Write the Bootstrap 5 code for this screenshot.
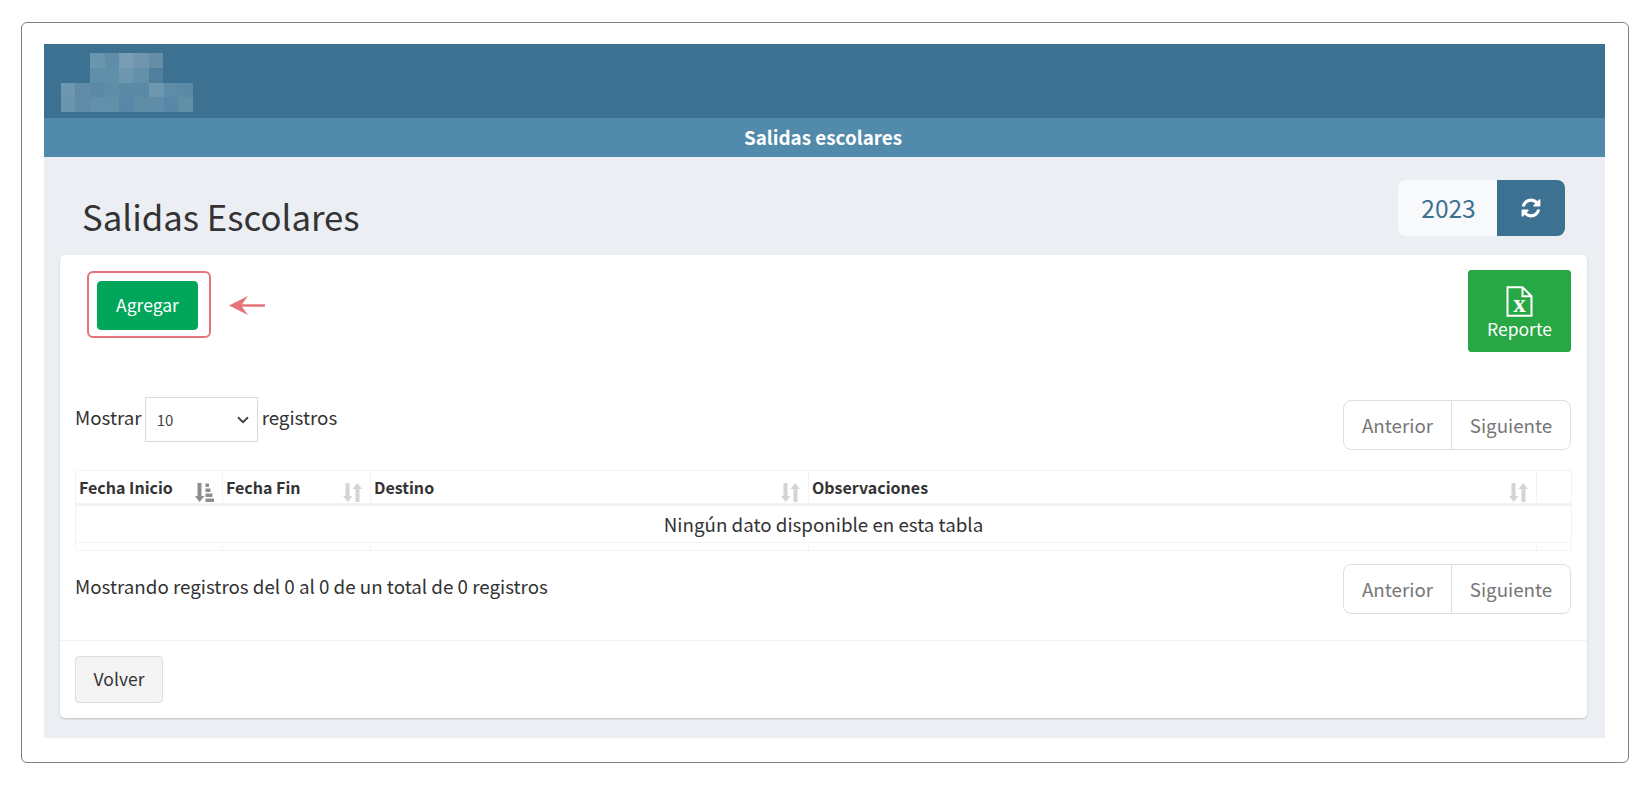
<!DOCTYPE html>
<html lang="es">
<head>
<meta charset="utf-8">
<title>Salidas Escolares</title>
<link href="https://cdn.jsdelivr.net/npm/bootstrap@5.3.0/dist/css/bootstrap.min.css" rel="stylesheet">
<style>
html,body{background:#fff;}
body{font-family:"Noto Sans CJK SC","Noto Sans",sans-serif;font-size:18.75px;color:#333;padding:22px 22px 0 21px;}
.frame{border:1px solid #808080;border-radius:6px;padding:21px 23px 24px 22px;height:741px;}
.shell{background:#ebeef3;height:694px;}
.top-band{background:#3d7191;height:74px;padding:9px 0 0 17px;}
.top-band svg{display:block;}
.sub-band{background:#518aab;height:39px;color:#fff;font-weight:700;font-size:18.85px;line-height:38px;text-align:center;padding-right:3px;}
.head-row{height:98px;padding:23px 40px 0 38px;}
.page-title{font-size:34.75px;font-weight:400;line-height:48px;margin:12px 0 0 0;color:#333;}
.year-box{width:167px;height:56px;border-radius:8px;overflow:hidden;}
.year-val{width:99px;background:#f8f9fa;color:#3d7191;font-size:24.5px;padding-left:2px;}
.year-btn{width:68px;background:#3d7191;border:0;border-radius:0;padding:0;}
.sheet{margin:0 18px 0 16px;height:463px;border:0;border-radius:5px;box-shadow:0 1px 2px rgba(0,0,0,.2);}
.sheet-body{height:385px;padding:15px 16px 0 15px;flex:none;}
.tool-row{height:127px;align-items:flex-start;}
.mark-box{margin:1px 0 0 12px;width:124px;height:67px;border:2px solid #e4747a;border-radius:6px;padding:8px;}
.add-btn{width:101px;height:49px;background:#00a65a;border:1px solid #00a65a;color:#fff;font-size:17.5px;border-radius:4px;padding:0;}
.arrow-mark{margin:26px 0 0 18px;}
.rep-btn{width:103px;height:82px;background:#28a745;border:1px solid #28a745;color:#fff;font-size:17.5px;line-height:22px;border-radius:3px;padding:4px 0 0 0;}
.rep-btn svg{display:block;margin:0 auto 1px;}
.len-select{width:113px;height:45px;font-size:15px;border:1px solid #d8dbe4;border-radius:0;padding:2px 0 0 11px;margin:0 4px 0 3px;color:#444;background-position:right 6px center;background-image:url("data:image/svg+xml,%3csvg xmlns='http://www.w3.org/2000/svg' viewBox='0 0 16 16'%3e%3cpath fill='none' stroke='%23444' stroke-linecap='round' stroke-linejoin='round' stroke-width='2.4' d='M2 5l6 6 6-6'/%3e%3c/svg%3e");}
.pager{--bs-pagination-color:#777;--bs-pagination-disabled-color:#777;--bs-pagination-disabled-bg:#fff;--bs-pagination-border-color:#dedede;--bs-pagination-disabled-border-color:#dedede;--bs-pagination-padding-x:18px;--bs-pagination-padding-y:10px;--bs-pagination-font-size:18.75px;--bs-pagination-border-radius:8px;margin:0;}
.pager .page-link{height:50px;line-height:28px;}
.pager-a{width:109px;text-align:center;padding-left:0;padding-right:0;}
.pager-b{width:120px;text-align:center;padding-left:0;padding-right:0;}
.len-row{height:73px;}
.len-row .pager{margin-top:3px;}
.len-col{margin-top:-4px;}
.len-label{margin-bottom:4px;}
.grid-table{table-layout:fixed;width:1496px;margin:0;border-collapse:collapse;--bs-table-border-color:#f3f3f3;font-size:18.75px;color:#333;}
.grid-table th,.grid-table td{border:1px solid #f3f3f3;padding:0;}
.grid-table thead th{height:34px;font-size:16px;font-weight:700;padding:0 3px;vertical-align:top;line-height:32px;border-bottom:3px solid #f3f3f3;}
.grid-table tbody td{height:37px;text-align:center;line-height:36px;}
.grid-table tfoot td{height:8px;}
.sort-cell{display:flex;justify-content:space-between;align-items:flex-start;}
.sort-cell svg{margin:12px 5px 0 0;flex:none;}
.info-row{height:91px;padding-top:13px;}
.sheet-foot{background:#fff;border-top:1px solid #f2f2f2;padding:15px;height:78px;}
.back-btn{width:88px;height:47px;background:#f4f4f4;border:1px solid #ddd;color:#333;font-size:17.5px;padding:0;border-radius:4px;}
</style>
</head>
<body>
<div class="frame">
  <div class="shell d-flex flex-column">
    <div class="top-band">
      <svg width="132" height="59" viewBox="0 0 132 59" aria-hidden="true">
        <g>
          <rect x="29" y="0" width="15" height="15" fill="#6b97ae"/><rect x="44" y="0" width="14" height="15" fill="#5f8ca7"/><rect x="58" y="0" width="15" height="15" fill="#769db4"/><rect x="73" y="0" width="15" height="15" fill="#7195af"/><rect x="88" y="0" width="14" height="15" fill="#668da8"/>
          <rect x="29" y="15" width="29" height="15" fill="#6090a9"/><rect x="58" y="15" width="15" height="15" fill="#6c97af"/><rect x="73" y="15" width="15" height="15" fill="#6391aa"/><rect x="88" y="15" width="14" height="15" fill="#4e7f9c"/>
          <rect x="0" y="30" width="14" height="14" fill="#6f97b0"/><rect x="14" y="30" width="15" height="14" fill="#608ca8"/><rect x="29" y="30" width="15" height="14" fill="#5a8aa5"/><rect x="44" y="30" width="14" height="14" fill="#5f8da8"/><rect x="58" y="30" width="15" height="14" fill="#5a8aa6"/><rect x="73" y="30" width="15" height="14" fill="#5a8aa5"/><rect x="88" y="30" width="15" height="14" fill="#6e98b0"/><rect x="103" y="30" width="14" height="14" fill="#5d8ca8"/><rect x="117" y="30" width="15" height="14" fill="#5a8aa5"/>
          <rect x="0" y="44" width="14" height="15" fill="#6b95ae"/><rect x="14" y="44" width="15" height="15" fill="#608ca8"/><rect x="29" y="44" width="29" height="15" fill="#6090aa"/><rect x="58" y="44" width="15" height="15" fill="#5887a8"/><rect x="73" y="44" width="14" height="15" fill="#5f8ca6"/><rect x="87" y="44" width="16" height="15" fill="#5f8da8"/><rect x="103" y="44" width="14" height="15" fill="#5888a7"/><rect x="117" y="44" width="15" height="15" fill="#628fa8"/>
        </g>
      </svg>
    </div>
    <div class="sub-band">Salidas escolares</div>
    <div class="head-row d-flex justify-content-between align-items-start">
      <h1 class="page-title">Salidas Escolares</h1>
      <div class="year-box d-flex">
        <div class="year-val d-flex align-items-center justify-content-center">2023</div>
        <button type="button" class="btn year-btn d-flex align-items-center justify-content-center" aria-label="Actualizar">
          <svg width="22" height="22" viewBox="0 0 1536 1792" fill="#fff"><path d="M1511 1056q0 5-1 7-64 268-268 434.5t-478 166.5q-146 0-282.5-55t-243.5-157l-129 129q-19 19-45 19t-45-19-19-45v-448q0-26 19-45t45-19h448q26 0 45 19t19 45-19 45l-137 137q71 66 161 102t187 36q134 0 250-65t186-179q11-17 53-117 8-23 30-23h192q13 0 22.5 9.5t9.5 22.5zm25-800v448q0 26-19 45t-45 19h-448q-26 0-45-19t-19-45 19-45l138-138q-148-137-349-137-134 0-250 65t-186 179q-11 17-53 117-8 23-30 23h-199q-13 0-22.5-9.5t-9.5-22.5v-7q65-268 270-434.5t480-166.5q146 0 284 55.5t245 156.5l130-129q19-19 45-19t45 19 19 45z"/></svg>
        </button>
      </div>
    </div>
    <div class="card sheet">
      <div class="card-body sheet-body">
        <div class="tool-row d-flex justify-content-between">
          <div class="d-flex">
            <div class="mark-box"><button type="button" class="btn add-btn">Agregar</button></div>
            <svg class="arrow-mark" width="36" height="19" viewBox="0 0 36 19" aria-hidden="true"><path d="M0 9.500 L19 0 L13 8.200 H36 V10.800 H13 L19 19 Z" fill="#e4747a"/></svg>
          </div>
          <button type="button" class="btn rep-btn">
            <svg width="27" height="31" viewBox="0 0 27 31" aria-hidden="true"><path d="M1.500 1.200 H16.500 L25.500 10.200 V29.800 H1.500 Z M16.500 1.200 V10.200 H25.500" fill="none" stroke="#fff" stroke-width="2"/><text x="13.500" y="26" text-anchor="middle" font-family="Liberation Serif,serif" font-weight="700" font-size="25" fill="#fff">x</text></svg>
            Reporte
          </button>
        </div>
        <div class="len-row d-flex justify-content-between align-items-start">
          <div class="len-col d-flex align-items-center pt-1">
            <span class="len-label">Mostrar</span>
            <select class="form-select len-select" aria-label="Registros"><option>10</option></select>
            <span class="len-label">registros</span>
          </div>
          <ul class="pagination pager">
            <li class="page-item disabled"><span class="page-link pager-a">Anterior</span></li>
            <li class="page-item disabled"><span class="page-link pager-b">Siguiente</span></li>
          </ul>
        </div>
        <table class="table grid-table mb-0">
          <colgroup><col style="width:147px"><col style="width:148px"><col style="width:438px"><col style="width:728px"><col style="width:35px"></colgroup>
          <thead>
            <tr>
              <th><div class="sort-cell">Fecha Inicio
                <svg width="19" height="19" viewBox="0 0 19 19" fill="#8d8d8d"><path d="M2.500 0H6.500V13H9.500L4.500 19 0 13H2.500Z"/><path d="M10.500 0.500H14V4H10.500ZM10.500 5.500H15.500V9H10.500ZM10.500 10.500H17.500V14H10.500ZM10.500 15.500H19V19H10.500Z"/></svg></div></th>
              <th><div class="sort-cell">Fecha Fin
                <svg width="19" height="19" viewBox="0 0 19 19" fill="#d4d4d4"><path d="M2.500 0H6.500V13H9.500L4.750 19 0 13H2.500Z"/><path d="M12.500 19H16.500V6H19L14.250 0 9.500 6H12.500Z"/></svg></div></th>
              <th><div class="sort-cell">Destino
                <svg width="19" height="19" viewBox="0 0 19 19" fill="#d4d4d4"><path d="M2.500 0H6.500V13H9.500L4.750 19 0 13H2.500Z"/><path d="M12.500 19H16.500V6H19L14.250 0 9.500 6H12.500Z"/></svg></div></th>
              <th><div class="sort-cell">Observaciones
                <svg width="19" height="19" viewBox="0 0 19 19" fill="#d4d4d4"><path d="M2.500 0H6.500V13H9.500L4.750 19 0 13H2.500Z"/><path d="M12.500 19H16.500V6H19L14.250 0 9.500 6H12.500Z"/></svg></div></th>
              <th></th>
            </tr>
          </thead>
          <tbody><tr><td colspan="5">Ningún dato disponible en esta tabla</td></tr></tbody>
          <tfoot><tr><td></td><td></td><td></td><td></td><td></td></tr></tfoot>
        </table>
        <div class="info-row d-flex justify-content-between align-items-start">
          <div class="pt-2">Mostrando registros del 0 al 0 de un total de 0 registros</div>
          <ul class="pagination pager">
            <li class="page-item disabled"><span class="page-link pager-a">Anterior</span></li>
            <li class="page-item disabled"><span class="page-link pager-b">Siguiente</span></li>
          </ul>
        </div>
      </div>
      <div class="card-footer sheet-foot"><button type="button" class="btn back-btn">Volver</button></div>
    </div>
  </div>
</div>
<script src="https://cdn.jsdelivr.net/npm/bootstrap@5.3.0/dist/js/bootstrap.bundle.min.js"></script>
</body>
</html>
